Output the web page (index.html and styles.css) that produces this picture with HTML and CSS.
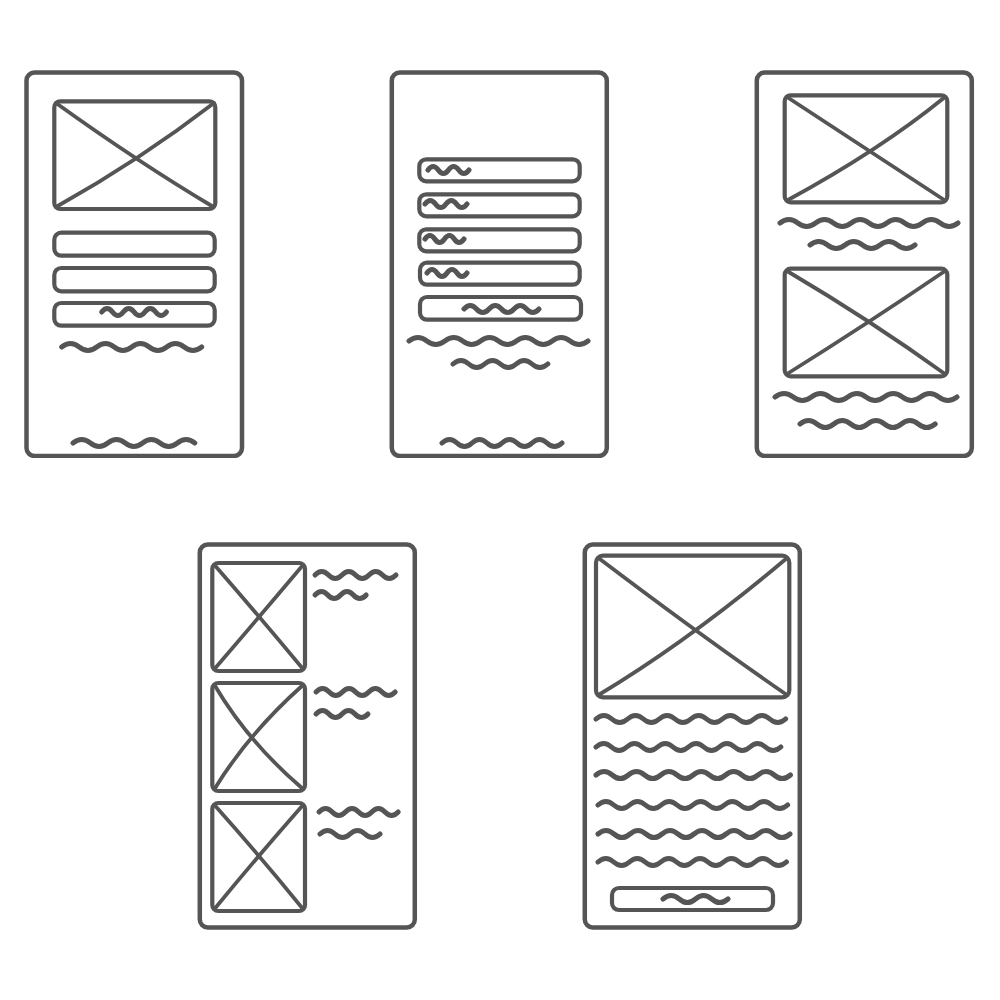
FILE: index.html
```html
<!DOCTYPE html>
<html lang="en">
<head>
<meta charset="utf-8">
<title>Mobile wireframes</title>
<link rel="stylesheet" href="styles.css">
</head>
<body>
<svg class="defs" width="0" height="0" aria-hidden="true">
  <filter id="soft" filterUnits="userSpaceOnUse" x="0" y="0" width="1000" height="1000">
    <feGaussianBlur stdDeviation="0.55"/>
  </filter>
</svg>
<main class="sheet">
  <div class="row row-top">
    <svg class="phone" width="222" height="388" viewBox="24 70 222 388" aria-label="Login screen">
      <rect class="frame" x="26.5" y="72.5" width="215.5" height="383.5" rx="8"/>
      <rect class="box" x="54.3" y="101.3" width="161" height="107.7" rx="6"/>
      <path class="x" d="M56 103 Q138 162 213.5 207"/>
      <path class="x" d="M56 207 Q140 160 214 103"/>
      <rect class="box" x="54.3" y="232.7" width="160.4" height="23" rx="7"/>
      <rect class="box" x="54.3" y="268" width="160.4" height="23.3" rx="7"/>
      <rect class="box" x="54.3" y="303" width="160.4" height="22.7" rx="7"/>
      <path class="sq" d="M101.7 312 q5.4 -7 10.8 0 t10.8 0 t10.8 0 t10.8 0 t10.8 0 t10.8 0"/>
      <path class="sq" d="M61.7 347 q8.75 -7 17.5 0 t17.5 0 t17.5 0 t17.5 0 t17.5 0 t17.5 0 t17.5 0 t17.5 0"/>
      <path class="sq" d="M73 443 q8.7 -7 17.4 0 t17.4 0 t17.4 0 t17.4 0 t17.4 0 t17.4 0 t17.4 0"/>
    </svg>
    <svg class="phone" width="222" height="388" viewBox="389 70 222 388" aria-label="Form screen">
      <rect class="frame" x="391.8" y="72.5" width="215" height="383.5" rx="8"/>
      <rect class="box" x="419.3" y="159.3" width="160.4" height="22" rx="7"/>
      <rect class="box" x="419.3" y="194.3" width="160.4" height="22" rx="7"/>
      <rect class="box" x="419.3" y="229.3" width="160.4" height="22" rx="7"/>
      <rect class="box" x="420" y="262.7" width="159.7" height="22" rx="7"/>
      <rect class="box" x="420" y="297" width="161" height="22.7" rx="7"/>
      <path class="sq" d="M428 170 q5.1 -7 10.25 0 t10.25 0 t10.25 0 t10.25 0"/>
      <path class="sq" d="M425 204 q5.25 -7 10.5 0 t10.5 0 t10.5 0 t10.5 0"/>
      <path class="sq" d="M425 239 q4.9 -7 9.75 0 t9.75 0 t9.75 0 t9.75 0"/>
      <path class="sq" d="M427 273 q5 -7 10 0 t10 0 t10 0 t10 0"/>
      <path class="sq" d="M464 309 q6.25 -7 12.5 0 t12.5 0 t12.5 0 t12.5 0 t12.5 0 t12.5 0"/>
      <path class="sq" d="M409 341 q8.95 -7 17.9 0 t17.9 0 t17.9 0 t17.9 0 t17.9 0 t17.9 0 t17.9 0 t17.9 0 t17.9 0 t17.9 0"/>
      <path class="sq" d="M453 364 q7.9 -7 15.8 0 t15.8 0 t15.8 0 t15.8 0 t15.8 0 t15.8 0"/>
      <path class="sq" d="M442 443 q7.5 -7 15 0 t15 0 t15 0 t15 0 t15 0 t15 0 t15 0 t15 0"/>
    </svg>
    <svg class="phone" width="222" height="388" viewBox="754 70 222 388" aria-label="Feed screen">
      <rect class="frame" x="756.8" y="72.5" width="215" height="383.5" rx="8"/>
      <rect class="box" x="784.7" y="95.3" width="162.6" height="107" rx="6"/>
      <path class="x" d="M787 97 Q880 158 945 200.5"/>
      <path class="x" d="M787 200.5 Q880 150 945 97"/>
      <path class="sq" d="M780 223 q8.9 -7 17.8 0 t17.8 0 t17.8 0 t17.8 0 t17.8 0 t17.8 0 t17.8 0 t17.8 0 t17.8 0 t17.8 0"/>
      <path class="sq" d="M810 245 q8.75 -7 17.5 0 t17.5 0 t17.5 0 t17.5 0 t17.5 0 t17.5 0"/>
      <rect class="box" x="784.7" y="268.7" width="162.6" height="107.6" rx="6"/>
      <path class="x" d="M787 271 Q870 320 945 374"/>
      <path class="x" d="M787 374 Q870 322 945 271"/>
      <path class="sq" d="M775 397 q9.1 -7 18.2 0 t18.2 0 t18.2 0 t18.2 0 t18.2 0 t18.2 0 t18.2 0 t18.2 0 t18.2 0 t18.2 0"/>
      <path class="sq" d="M800 424 q8.45 -7 16.9 0 t16.9 0 t16.9 0 t16.9 0 t16.9 0 t16.9 0 t16.9 0 t16.9 0"/>
    </svg>
  </div>
  <div class="row row-bottom">
    <svg class="phone" width="222" height="390" viewBox="197 541 222 390" aria-label="List screen">
      <rect class="frame" x="199.8" y="544.5" width="215" height="383" rx="8"/>
      <rect class="box" x="212.3" y="563" width="92.7" height="108" rx="6"/>
      <path class="x" d="M214.5 565 Q259 616 303 669"/>
      <path class="x" d="M214.5 669 Q260 616 303 565"/>
      <rect class="box" x="212.3" y="683" width="92.7" height="108" rx="6"/>
      <path class="x" d="M214.5 685 Q248 742 303 789"/>
      <path class="x" d="M214.5 789 Q248 734 303 685"/>
      <rect class="box" x="212.3" y="803" width="92.7" height="108" rx="6"/>
      <path class="x" d="M214.5 805 Q260 856 303 909"/>
      <path class="x" d="M214.5 909 Q258 856 303 805"/>
      <path class="sq" d="M315 575 q6.75 -7 13.5 0 t13.5 0 t13.5 0 t13.5 0 t13.5 0 t13.5 0"/>
      <path class="sq" d="M315 595 q6.4 -7 12.8 0 t12.8 0 t12.8 0 t12.8 0"/>
      <path class="sq" d="M316 692 q6.6 -7 13.2 0 t13.2 0 t13.2 0 t13.2 0 t13.2 0 t13.2 0"/>
      <path class="sq" d="M316 714 q6.5 -7 13 0 t13 0 t13 0 t13 0"/>
      <path class="sq" d="M319 812 q6.6 -7 13.2 0 t13.2 0 t13.2 0 t13.2 0 t13.2 0 t13.2 0"/>
      <path class="sq" d="M320 834 q7.5 -7 15 0 t15 0 t15 0 t15 0"/>
    </svg>
    <svg class="phone" width="222" height="390" viewBox="582 541 222 390" aria-label="Article screen">
      <rect class="frame" x="584.8" y="544.5" width="215" height="383" rx="8"/>
      <rect class="box" x="596" y="555.7" width="193.3" height="141.6" rx="7"/>
      <path class="x" d="M598.5 558 Q700 635 787 695"/>
      <path class="x" d="M598.5 695 Q690 640 787 558"/>
      <path class="sq" d="M596 719 q7.9 -7 15.8 0 t15.8 0 t15.8 0 t15.8 0 t15.8 0 t15.8 0 t15.8 0 t15.8 0 t15.8 0 t15.8 0 t15.8 0 t15.8 0"/>
      <path class="sq" d="M596 747 q7.7 -7 15.4 0 t15.4 0 t15.4 0 t15.4 0 t15.4 0 t15.4 0 t15.4 0 t15.4 0 t15.4 0 t15.4 0 t15.4 0 t15.4 0"/>
      <path class="sq" d="M596 775 q8.1 -7 16.2 0 t16.2 0 t16.2 0 t16.2 0 t16.2 0 t16.2 0 t16.2 0 t16.2 0 t16.2 0 t16.2 0 t16.2 0 t16.2 0"/>
      <path class="sq" d="M598 805 q7.9 -7 15.8 0 t15.8 0 t15.8 0 t15.8 0 t15.8 0 t15.8 0 t15.8 0 t15.8 0 t15.8 0 t15.8 0 t15.8 0 t15.8 0"/>
      <path class="sq" d="M598 834 q8 -7 16 0 t16 0 t16 0 t16 0 t16 0 t16 0 t16 0 t16 0 t16 0 t16 0 t16 0 t16 0"/>
      <path class="sq" d="M598 862 q7.85 -7 15.7 0 t15.7 0 t15.7 0 t15.7 0 t15.7 0 t15.7 0 t15.7 0 t15.7 0 t15.7 0 t15.7 0 t15.7 0 t15.7 0"/>
      <rect class="box" x="612" y="888" width="161" height="22" rx="7"/>
      <path class="sq" d="M663 899 q8.1 -7 16.25 0 t16.25 0 t16.25 0 t16.25 0"/>
    </svg>
  </div>
</main>
</body>
</html>
```
FILE: styles.css
```css
html, body {
  margin: 0;
  padding: 0;
  background: #ffffff;
}

.defs {
  position: absolute;
  width: 0;
  height: 0;
  overflow: hidden;
}

.sheet {
  width: 1000px;
  height: 1000px;
  overflow: hidden;
}

.row {
  display: flex;
  justify-content: center;
}

.row-top {
  padding-top: 70px;
  gap: 143px;
}

.row-bottom {
  margin-top: 83px;
  gap: 163px;
}

.phone {
  display: block;
  flex: none;
}

.frame,
.box,
.x,
.sq {
  fill: none;
  stroke: #555555;
  stroke-linecap: round;
  stroke-linejoin: round;
}

.frame {
  stroke-width: 4.5;
}

.box {
  stroke-width: 4.2;
}

.x {
  stroke-width: 3.8;
  filter: url(#soft);
}

.sq {
  stroke-width: 5;
  filter: url(#soft);
}
```
